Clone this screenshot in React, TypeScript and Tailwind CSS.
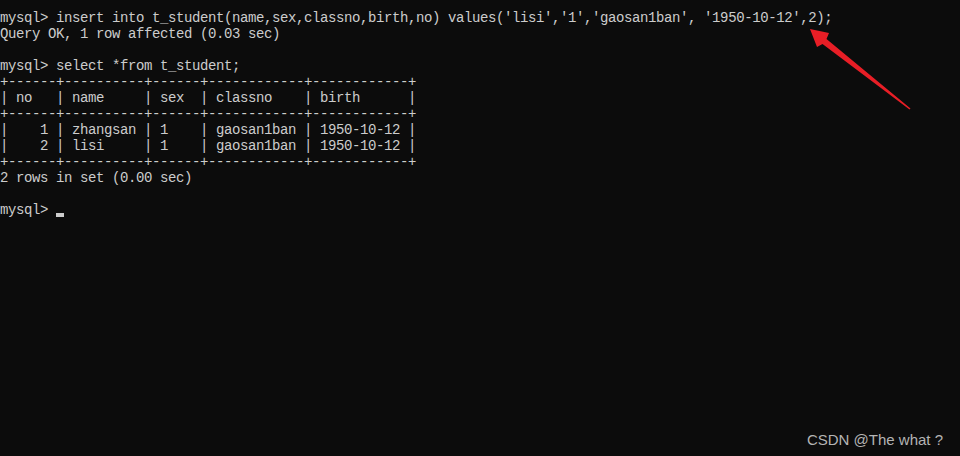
import React from "react";

const lines: string[] = [
  "mysql> insert into t_student(name,sex,classno,birth,no) values('lisi','1','gaosan1ban', '1950-10-12',2);",
  "Query OK, 1 row affected (0.03 sec)",
  "",
  "mysql> select *from t_student;",
  "+------+----------+------+------------+------------+",
  "| no   | name     | sex  | classno    | birth      |",
  "+------+----------+------+------------+------------+",
  "|    1 | zhangsan | 1    | gaosan1ban | 1950-10-12 |",
  "|    2 | lisi     | 1    | gaosan1ban | 1950-10-12 |",
  "+------+----------+------+------------+------------+",
  "2 rows in set (0.00 sec)",
  "",
];

export default function App() {
  return (
    <div className="relative h-[456px] w-[960px] overflow-hidden bg-[#0c0c0c]">
      <div
        className="pt-[10px] text-[14px] leading-[16px] tracking-[-0.4px] text-[#cccccc] whitespace-pre"
        style={{ fontFamily: '"Liberation Mono", "DejaVu Sans Mono", monospace' }}
      >
        {lines.map((l, i) => (
          <div key={i} className="h-[16px]">
            {l}
          </div>
        ))}
        <div className="flex h-[16px]">
          <span>{"mysql> "}</span>
          <span className="mt-[11px] h-[4px] w-[8px] bg-[#cccccc]" />
        </div>
      </div>

      <svg
        className="absolute left-0 top-0"
        width="960"
        height="456"
        viewBox="0 0 960 456"
      >
        <polygon
          points="810,29 829,33 826.5,39 910.5,108.5 909.5,109.5 822.5,44 817,47"
          fill="#e81e26"
        />
      </svg>

      <div
        className="absolute right-[17px] top-[430px] text-[15px] leading-[20px] text-[#b4b4b4]"
        style={{ fontFamily: '"Liberation Sans", Arial, sans-serif' }}
      >
        CSDN @The what ?
      </div>
    </div>
  );
}
